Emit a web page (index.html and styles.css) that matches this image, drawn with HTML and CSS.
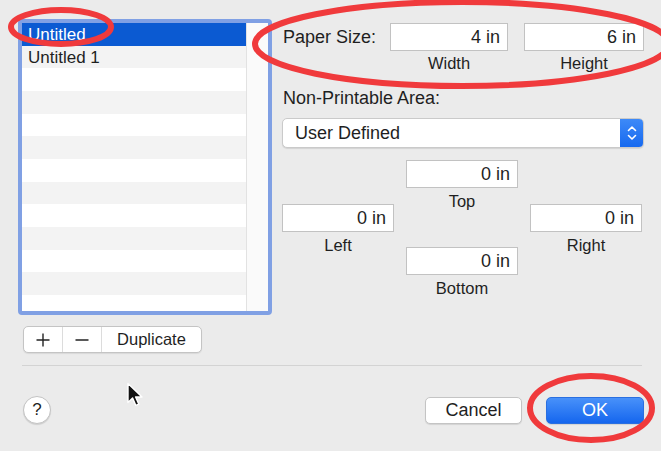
FILE: index.html
```html
<!DOCTYPE html>
<html lang="en">
<head>
    <meta charset="UTF-8" />
    <meta name="viewport" content="width=device-width, initial-scale=1" />
    <title>Manage Custom Sizes</title>
    <link rel="stylesheet" href="styles.css">
</head>
<body>
    <div class="dialog">
        <div class="main">
            <div class="sidebar">
                <div class="list">
                    <div class="rows">
                        <div class="row selected">Untitled</div>
                        <div class="row">Untitled 1</div>
                        <div class="row"></div>
                        <div class="row"></div>
                        <div class="row"></div>
                        <div class="row"></div>
                        <div class="row"></div>
                        <div class="row"></div>
                        <div class="row"></div>
                        <div class="row"></div>
                        <div class="row"></div>
                        <div class="row"></div>
                        <div class="row"></div>
                    </div>
                    <div class="scrollbar"></div>
                </div>
                <div class="segmented">
                    <button class="seg seg-icon" title="Add">
                        <svg width="16" height="16" viewBox="0 0 16 16"><path d="M8 1.5v13M1.5 8h13" stroke="#222" stroke-width="1.4" fill="none"/></svg>
                    </button>
                    <button class="seg seg-icon" title="Remove">
                        <svg width="16" height="16" viewBox="0 0 16 16"><path d="M1.5 8h13" stroke="#222" stroke-width="1.4" fill="none"/></svg>
                    </button>
                    <button class="seg seg-text">Duplicate</button>
                </div>
            </div>

            <div class="settings">
                <div class="paper-row">
                    <span class="paper-label">Paper Size:</span>
                    <div class="field field-wide">4 in</div>
                    <div class="field field-wider">6 in</div>
                </div>
                <div class="paper-captions">
                    <span class="caption field-wide">Width</span>
                    <span class="caption field-wider">Height</span>
                </div>

                <div class="section-label">Non-Printable Area:</div>
                <div class="popup">
                    <span class="popup-text">User Defined</span>
                    <span class="stepper">
                        <svg width="24" height="30" viewBox="0 0 24 30"><path d="M8.5 12.5 12 9l3.5 3.5M8.5 17.5 12 21l3.5-3.5" stroke="#fff" stroke-width="1.6" fill="none" stroke-linecap="round" stroke-linejoin="round"/></svg>
                    </span>
                </div>

                <div class="margins">
                    <div class="margin-col side">
                        <div class="field">0 in</div>
                        <span class="caption">Left</span>
                    </div>
                    <div class="margin-col">
                        <div class="field">0 in</div>
                        <span class="caption">Top</span>
                        <div class="field bottom-field">0 in</div>
                        <span class="caption">Bottom</span>
                    </div>
                    <div class="margin-col side">
                        <div class="field">0 in</div>
                        <span class="caption">Right</span>
                    </div>
                </div>
            </div>
        </div>

        <div class="separator"></div>

        <div class="footer">
            <button class="help">?</button>
            <div class="actions">
                <button class="push">Cancel</button>
                <button class="push default">OK</button>
            </div>
        </div>

        <!-- annotation marks drawn on top of the screenshot -->
        <svg class="marks" width="661" height="451" viewBox="0 0 661 451">
            <ellipse cx="61" cy="27" rx="50" ry="17" />
            <ellipse cx="462" cy="44" rx="207" ry="42" />
            <ellipse cx="591" cy="408" rx="61" ry="32" stroke-width="7" />
        </svg>

        <svg class="cursor" width="20" height="26" viewBox="0 0 20 26">
            <path d="M2 1.5v19l4.6-4.4 3.2 7.3 3-1.3-3.2-7.1h6.4z" fill="#111" stroke="#fff" stroke-width="1.4" stroke-linejoin="round"/>
        </svg>
    </div>
</body>
</html>
```

FILE: styles.css
```css
body {
    margin: 0;
    background-color: #ebebeb;
    font-family: "Liberation Sans", Arial, sans-serif;
    color: #1f1f1f;
}
button {
    font-family: inherit;
    color: inherit;
    cursor: pointer;
}
.dialog {
    position: relative;
    width: 661px;
    height: 451px;
    overflow: hidden;
}
.main {
    display: flex;
    gap: 10px;
    padding: 19px 0 0 18px;
}

/* list of custom sizes */
.list {
    display: flex;
    width: 246px;
    height: 288px;
    border: 4px solid #80a0e4;
    border-radius: 4px;
    background-color: #fff;
    overflow: hidden;
}
.rows {
    flex: 1;
}
.row {
    height: 22.67px;
    line-height: 24px;
    padding-left: 6px;
    font-size: 17px;
    white-space: nowrap;
}
.row:nth-child(even) {
    background-color: #f3f3f3;
}
.row.selected {
    background-color: #0b5ad2;
    color: #fff;
}
.scrollbar {
    width: 21px;
    background-color: #fafafa;
    border-left: 1px solid #e2e2e2;
}
.segmented {
    display: flex;
    width: 177px;
    height: 25px;
    margin: 11px 0 0 5px;
    border: 1px solid #c4c4c4;
    border-radius: 5px;
    background-color: #fff;
    box-shadow: 0 1px 1px rgba(0, 0, 0, 0.08);
    overflow: hidden;
}
.seg {
    display: flex;
    align-items: center;
    justify-content: center;
    border: none;
    background: none;
    padding: 0;
}
.seg-icon {
    width: 39px;
    border-right: 1px solid #dcdcdc;
}
.seg-text {
    flex: 1;
    font-size: 16.5px;
}

/* paper settings */
.settings {
    width: 362px;
}
.paper-row {
    display: flex;
    align-items: center;
    margin-top: 4px;
}
.paper-label {
    width: 107px;
    padding-left: 1px;
    font-size: 18px;
}
.field {
    box-sizing: border-box;
    height: 28px;
    line-height: 27px;
    padding-right: 7px;
    border: 1px solid #c2c2c2;
    background-color: #fff;
    text-align: right;
    font-size: 18px;
}
.field-wide {
    width: 118px;
}
.field-wider {
    width: 120px;
    margin-left: 16px;
}
.paper-captions {
    display: flex;
    padding-left: 108px;
    margin-top: 3px;
}
.caption {
    display: block;
    line-height: 18px;
    margin-top: 4px;
    text-align: center;
    font-size: 16.5px;
}
.paper-captions .caption {
    margin-top: 0;
}
.section-label {
    margin-top: 15px;
    padding-left: 1px;
    line-height: 22px;
    font-size: 18px;
}
.popup {
    display: flex;
    justify-content: space-between;
    box-sizing: border-box;
    width: 362px;
    height: 30px;
    margin-top: 9px;
    border: 1px solid #cacaca;
    border-radius: 5px;
    background-color: #fff;
    box-shadow: 0 1px 1px rgba(0, 0, 0, 0.1);
    overflow: hidden;
}
.popup-text {
    padding-left: 12px;
    line-height: 28px;
    font-size: 18px;
}
.stepper {
    display: flex;
    align-items: center;
    width: 24px;
    margin: -1px -1px -1px 0;
    background: linear-gradient(#3f8bf8, #1568ef);
}
.margins {
    display: flex;
    gap: 12px;
    margin-top: 12px;
}
.margin-col {
    width: 112px;
}
.margin-col.side {
    padding-top: 44px;
}
.bottom-field {
    margin-top: 37px;
}

/* bottom bar */
.separator {
    height: 1px;
    margin: 12px 19px 0 22px;
    background-color: #d3d3d3;
}
.footer {
    display: flex;
    justify-content: space-between;
    align-items: center;
    padding: 30px 17px 0 23px;
}
.help {
    width: 28px;
    height: 28px;
    padding: 0;
    border: 1px solid #c3c3c3;
    border-radius: 50%;
    background-color: #fff;
    box-shadow: 0 1px 1px rgba(0, 0, 0, 0.12);
    font-size: 17px;
}
.actions {
    display: flex;
    gap: 24px;
}
.push {
    width: 97px;
    height: 27px;
    padding: 0;
    border: 1px solid #c4c4c4;
    border-radius: 5px;
    background-color: #fff;
    box-shadow: 0 1px 1px rgba(0, 0, 0, 0.1);
    font-size: 18px;
}
.push.default {
    width: 98px;
    border-color: #2a6fe0;
    background: linear-gradient(#4891fa, #1566ee);
    color: #fff;
}

/* overlays */
.marks {
    position: absolute;
    left: 0;
    top: 0;
    pointer-events: none;
}
.marks ellipse {
    fill: none;
    stroke: #f03a3c;
    stroke-width: 6;
}
.cursor {
    position: absolute;
    left: 126px;
    top: 382px;
}
```
